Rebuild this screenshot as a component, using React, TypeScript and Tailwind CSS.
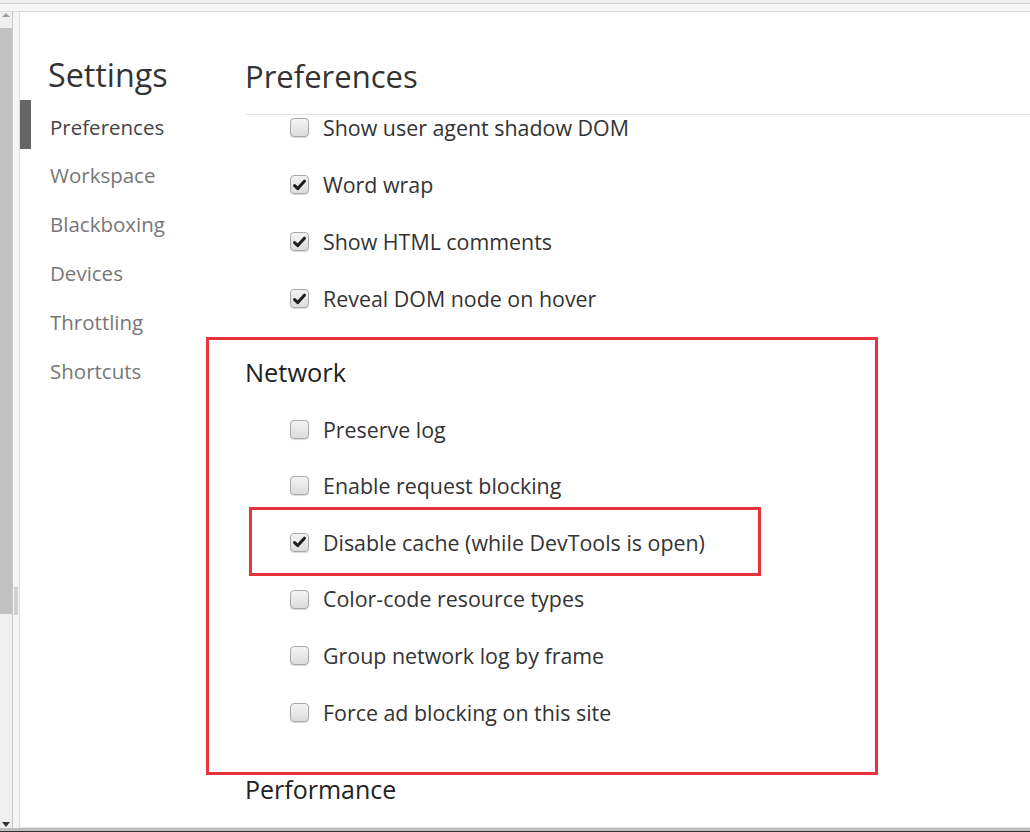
import React from "react";

const font = { fontFamily: '"Open Sans", "Noto Sans", sans-serif' };

function Box({ checked }: { checked: boolean }) {
  return (
    <div className="w-[19px] h-[19px] rounded-[4px] border border-[#a8a8a8] bg-gradient-to-b from-[#f4f4f4] to-[#dcdcdc] shadow-[0_1px_1px_rgba(0,0,0,0.15)] flex items-center justify-center shrink-0">
      {checked && (
        <svg width="13" height="12" viewBox="0 0 13 12">
          <path d="M1.6 6.6 L4.8 9.6 L11.4 2.2" fill="none" stroke="#1e1e1e" strokeWidth="3" strokeLinecap="round" strokeLinejoin="round" />
        </svg>
      )}
    </div>
  );
}

function Item({ label, checked, h = 57 }: { label: string; checked: boolean; h?: number }) {
  return (
    <div className="flex items-center gap-[14px] pl-[45px]" style={{ height: h }}>
      <Box checked={checked} />
      <span className="text-[21.4px] text-[#333] leading-none">{label}</span>
    </div>
  );
}

export default function App() {
  const nav = ["Preferences", "Workspace", "Blackboxing", "Devices", "Throttling", "Shortcuts"];
  return (
    <div className="w-[1030px] h-[832px] bg-white flex flex-col overflow-hidden" style={font}>
      {/* top chrome */}
      <div className="h-[12px] shrink-0 flex flex-col">
        <div className="h-[3px] bg-[#efefef]" />
        <div className="h-[1px] bg-[#cfcfcf]" />
        <div className="h-[7px] bg-[#f7f7f7]" />
        <div className="h-[1px] bg-[#dedede]" />
      </div>
      <div className="flex flex-1 min-h-0">
        {/* left scrollbar */}
        <div className="w-[12px] shrink-0 flex flex-col bg-[#f0f0f0]">
          <div className="h-[16px] flex items-start justify-center pt-[1px]">
            <div className="w-0 h-0 border-l-[4px] border-r-[4px] border-b-[4px] border-l-transparent border-r-transparent border-b-[#a0a0a0]" />
          </div>
          <div className="h-[586px] bg-[#c1c1c1]" />
          <div className="flex-1" />
          <div className="h-[8px] flex items-end justify-center pb-[1px]">
            <div className="w-0 h-0 border-l-[4px] border-r-[4px] border-t-[5px] border-l-transparent border-r-transparent border-t-[#333]" />
          </div>
        </div>
        <div className="w-[1px] bg-[#c8c8c8] shrink-0" />
        <div className="w-[6px] bg-[#f5f5f5] shrink-0 flex flex-col">
          <div className="h-[575px]" />
          <div className="h-[28px] bg-[#d0d0d0] mx-[1px]" />
        </div>
        <div className="w-[1px] bg-[#dcdcdc] shrink-0" />
        {/* main */}
        <div className="flex-1 flex flex-col min-w-0">
          <div className="flex flex-1 min-h-0">
            {/* sidebar */}
            <div className="w-[225px] shrink-0 flex flex-col pt-[46px]">
              <div className="pl-[28px] h-[42px] text-[32.3px] leading-none text-[#333]">Settings</div>
              <div className="flex flex-col">
                {nav.map((n, i) => (
                  <div key={n} className="flex items-center h-[48.8px]">
                    <div className={`w-[11px] h-full ${i === 0 ? "bg-[#666]" : ""}`} />
                    <span className={`pl-[19px] pt-[5px] text-[20.5px] leading-none ${i === 0 ? "text-[#444]" : "text-[#777]"}`}>{n}</span>
                  </div>
                ))}
              </div>
            </div>
            {/* content */}
            <div className="flex-1 flex flex-col min-w-0">
              <div className="h-[103px] border-b border-[#e4e4e4] flex items-end pb-[22px]">
                <span className="text-[31px] leading-none text-[#333]">Preferences</span>
              </div>
              <div className="flex flex-col -mt-[16px] relative">
                <Item label="Show user agent shadow DOM" checked={false} />
                <Item label="Word wrap" checked={true} />
                <Item label="Show HTML comments" checked={true} />
                <Item label="Reveal DOM node on hover" checked={true} />
                <div className="h-[74px] flex items-end pb-[16px]">
                  <span className="text-[25.4px] leading-none text-[#222]">Network</span>
                </div>
                <Item label="Preserve log" checked={false} h={56.6} />
                <Item label="Enable request blocking" checked={false} h={56.6} />
                <Item label="Disable cache (while DevTools is open)" checked={true} h={56.6} />
                <Item label="Color-code resource types" checked={false} h={56.6} />
                <Item label="Group network log by frame" checked={false} h={56.6} />
                <Item label="Force ad blocking on this site" checked={false} h={56.6} />
                <div className="h-[65px] flex items-end pb-[4px]">
                  <span className="text-[25px] leading-none text-[#222]">Performance</span>
                </div>
                {/* highlight overlays */}
                <div className="absolute left-[-39px] top-[238px] w-[672px] h-[438px] border-[3px] border-[#e8323c] pointer-events-none" />
                <div className="absolute left-[4px] top-[408px] w-[512px] h-[69px] border-[3px] border-[#e8323c] pointer-events-none" />
              </div>
            </div>
          </div>
          <div className="h-[1px] bg-[#e6e6e6] shrink-0" />
        </div>
      </div>
      <div className="h-[3px] bg-[#bdbdbd] shrink-0" />
      <div className="h-[1px] bg-[#333] shrink-0" />
    </div>
  );
}
